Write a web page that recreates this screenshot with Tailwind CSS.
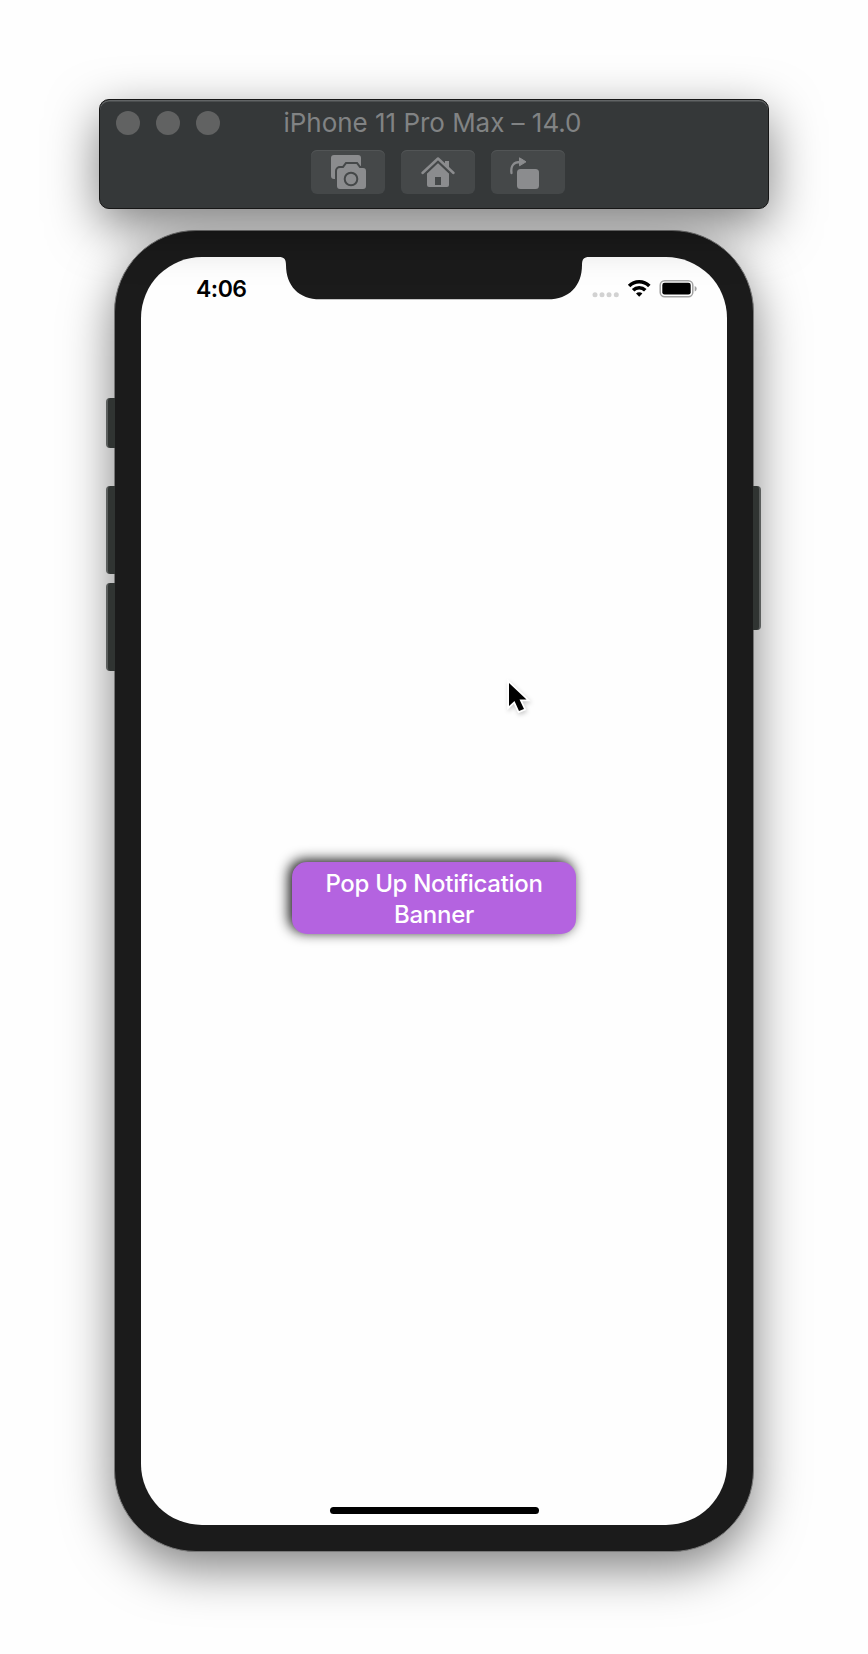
<!DOCTYPE html>
<html lang="en">
<head>
<meta charset="utf-8">
<title>iPhone 11 Pro Max – 14.0</title>
<script src="https://cdn.jsdelivr.net/npm/@tailwindcss/browser@4"></script>
</head>
<body class="bg-[#fefefe]">
<main class="flex h-[1654px] w-[868px] flex-col items-center overflow-hidden pt-[99px] font-['Inter','Liberation_Sans',sans-serif]">
  <!-- Simulator toolbar -->
  <header class="relative z-10 h-[110px] w-[670px] shrink-0 rounded-[10px] border border-[#161616] bg-[#353839] shadow-[0_16px_50px_rgba(0,0,0,0.5),inset_0_1.5px_0_#626566]">
    <div class="grid h-[45px] grid-cols-[180px_1fr_180px] items-center">
      <div class="flex gap-4 pl-4">
        <span class="size-6 rounded-full bg-[#616262]"></span>
        <span class="size-6 rounded-full bg-[#616262]"></span>
        <span class="size-6 rounded-full bg-[#616262]"></span>
      </div>
      <h1 class="pr-[3px] text-center text-[26px] leading-[44px] tracking-[-0.03px] whitespace-nowrap text-[#818384]">iPhone 11 Pro Max – 14.0</h1>
    </div>
    <nav class="flex justify-center gap-4 pt-[5px] pl-2">
      <button class="h-11 w-[74px] rounded-[6px] bg-[#454849] shadow-[inset_0_1px_0_#525556]" aria-label="Screenshot">
        <svg class="block" width="74" height="44" viewBox="0 0 74 44"><rect x="20" y="5" width="30" height="24" rx="3" fill="#8b8c8e"/><path d="M29 18h3.500l3-4h10l3 4h3.500a3 3 0 0 1 3 3v15a3 3 0 0 1-3 3H29a3 3 0 0 1-3-3V21a3 3 0 0 1 3-3Z" fill="#8b8c8e" stroke="#454849" stroke-width="4" paint-order="stroke"/><circle cx="40" cy="29" r="6.300" fill="none" stroke="#454849" stroke-width="2"/></svg>
      </button>
      <button class="h-11 w-[74px] rounded-[6px] bg-[#454849] shadow-[inset_0_1px_0_#525556]" aria-label="Home">
        <svg class="block" width="74" height="44" viewBox="0 0 74 44"><path d="M44 11h4v9l-4-4Z" fill="#8b8c8e"/><path d="M37 13 26 23.500V35a2 2 0 0 0 2 2h18a2 2 0 0 0 2-2V23.500Z" fill="#8b8c8e"/><path d="m22 24.800 15-14.300 15 14.300" fill="none" stroke="#454849" stroke-width="3.500"/><path d="m21.500 23 15.500-14.500L52.500 23" fill="none" stroke="#8b8c8e" stroke-width="2.500" stroke-linecap="round" stroke-linejoin="round"/><rect x="34" y="27" width="6" height="8" fill="#454849"/></svg>
      </button>
      <button class="h-11 w-[74px] rounded-[6px] bg-[#454849] shadow-[inset_0_1px_0_#525556]" aria-label="Rotate">
        <svg class="block" width="74" height="44" viewBox="0 0 74 44"><rect x="26" y="19" width="22" height="20" rx="3.500" fill="#8b8c8e"/><path d="M20.500 23c-1-7 2-11 9-11" fill="none" stroke="#8b8c8e" stroke-width="2.300" stroke-linecap="round"/><path d="M28.500 7.800v8l6.500-4Z" fill="#8b8c8e" stroke="#8b8c8e" stroke-linejoin="round"/></svg>
      </button>
    </nav>
  </header>

  <!-- Device -->
  <section class="relative mt-[21px] h-[1322px] w-[640px] shrink-0 rounded-[82px] border border-[#777] bg-[#1b1b1b] p-[26px] shadow-[0_16px_50px_rgba(0,0,0,0.5)]">
    <span class="absolute top-[167px] -left-[9px] h-[50px] w-[9px] rounded-l-[4px] border-l-2 border-[#5a5d5c] bg-[#303432]"></span>
    <span class="absolute top-[255px] -left-[9px] h-[88px] w-[9px] rounded-l-[4px] border-l-2 border-[#5a5d5c] bg-[#303432]"></span>
    <span class="absolute top-[352px] -left-[9px] h-[88px] w-[9px] rounded-l-[4px] border-l-2 border-[#5a5d5c] bg-[#303432]"></span>
    <span class="absolute top-[255px] -right-[8px] h-[144px] w-[8px] rounded-r-[4px] border-r-2 border-[#5a5d5c] bg-[#303432]"></span>

    <div class="relative flex h-[1268px] w-[586px] flex-col items-center overflow-hidden rounded-[61px] bg-[#fefefe]">
      <svg class="absolute top-0 left-[138px]" width="310" height="43" viewBox="0 0 310 43"><path d="M0-1V0C5 0 7 2 7 8C7 29 20 42.300 41 42.300H269C290 42.300 303 29 303 8C303 2 305 0 310 0V-1Z" fill="#1b1b1b"/></svg>
      <div class="flex h-[64px] w-full items-center justify-between pr-[30px] pl-[55px]">
        <time class="pt-px text-[23px] leading-none font-semibold tracking-[-0.5px] text-black">4:06</time>
        <svg width="106" height="24" viewBox="0 0 106 24" class="block">
          <g fill="#d2d2d2"><circle cx="4" cy="17.700" r="2.500"/><circle cx="11" cy="17.700" r="2.500"/><circle cx="18" cy="17.700" r="2.500"/><circle cx="25.300" cy="17.700" r="2.500"/></g>
          <g fill="none" stroke="#000" stroke-width="3.600"><path d="M38.100 8.900a14.300 14.300 0 0 1 20.200 0"/><path d="M42.100 13.200a8.700 8.700 0 0 1 12.200 0"/></g>
          <path d="M45 16.500a4.600 4.600 0 0 1 6.400 0L48.200 19.800Z" fill="#000"/>
          <rect x="69.200" y="3.700" width="32.600" height="16" rx="4.500" fill="none" stroke="#a2a2a2" stroke-width="1.500"/>
          <rect x="71.300" y="5.800" width="28.400" height="11.800" rx="2.300" fill="#000"/>
          <path d="M103.700 9q2 .8 2 2.800t-2 2.800Z" fill="#a2a2a2"/>
        </svg>
      </div>
      <button class="mt-[541px] h-[72px] w-[284px] rounded-[15px] bg-[#b463e0] px-7 pt-[2px] text-center text-[24px] leading-[31px] font-medium tracking-[-0.3px] text-white shadow-[-3px_-2px_13px_rgba(0,0,0,0.95)]">Pop Up Notification Banner</button>
      <div class="mt-auto mb-[11px] h-[7px] w-[209px] rounded-full bg-black"></div>
    </div>

    <svg class="absolute top-[448px] left-[390px] drop-shadow-[1px_2px_2px_rgba(0,0,0,0.2)]" width="26" height="38" viewBox="0 0 26 38"><path d="M4 4V27L9.500 22L14 32L19 30L14.500 20.500H21.500Z" fill="#000" stroke="#fff" stroke-width="3.500" paint-order="stroke"/></svg>
  </section>
</main>
</body>
</html>
